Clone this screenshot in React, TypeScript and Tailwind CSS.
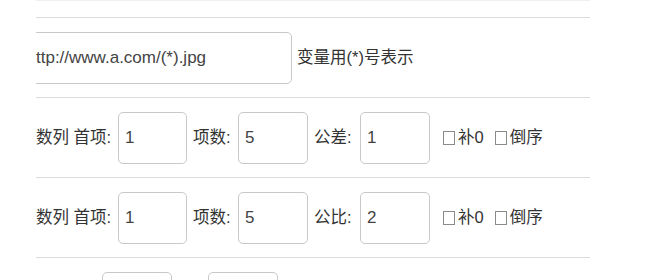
import React from "react";

const font = { fontFamily: '"Liberation Sans", "Noto Sans CJK SC", sans-serif' };

function Box({ value, w = "w-[70px]" }: { value: string; w?: string }) {
  return (
    <div
      className={`${w} h-[52px] shrink-0 rounded-[5px] border border-[#c9c9c9] bg-white flex items-center pl-[6px] text-[17px] text-[#444]`}
    >
      {value}
    </div>
  );
}

function Check({ label }: { label: string }) {
  return (
    <span className="flex items-center text-[16.5px] text-[#333]">
      <span className="inline-block w-[12px] h-[14px] border border-[#8a8a8a] mr-[3px]" />
      {label}
    </span>
  );
}

function Row({ third, thirdVal }: { third: string; thirdVal: string }) {
  return (
    <div className="h-[80px] border-b border-[#dcdcdc] flex items-center text-[16.5px] text-[#333]">
      <span className="w-[82px] shrink-0">数列 首项:</span>
      <Box value="1" w="w-[69px]" />
      <span className="ml-[6px] w-[45px] shrink-0">项数:</span>
      <Box value="5" />
      <span className="ml-[6px] w-[46px] shrink-0">{third}</span>
      <Box value={thirdVal} />
      <span className="ml-[13px]"><Check label="补0" /></span>
      <span className="ml-[11px]"><Check label="倒序" /></span>
    </div>
  );
}

export default function App() {
  return (
    <div className="w-[649px] h-[280px] bg-white overflow-hidden" style={font}>
      <div className="ml-[36px] w-[554px] overflow-hidden">
        <div className="h-[18px] border-t border-[#efefef] border-b border-b-[#dcdcdc]" />
        <div className="h-[80px] border-b border-[#dcdcdc] flex items-center">
          <div className="ml-[-8px] w-[264px] h-[52px] shrink-0 rounded-[5px] border border-[#c9c9c9] flex items-center pl-[7px] text-[17px] text-[#444]">
            ttp://www.a.com/(*).jpg
          </div>
          <span className="ml-[5px] text-[16.5px] text-[#333]">变量用(*)号表示</span>
        </div>
        <Row third="公差:" thirdVal="1" />
        <Row third="公比:" thirdVal="2" />
        <div className="h-[80px] flex items-center">
          <span className="w-[66px] shrink-0" />
          <Box value="" />
          <span className="ml-[36px] shrink-0" />
          <Box value="" />
        </div>
      </div>
    </div>
  );
}
